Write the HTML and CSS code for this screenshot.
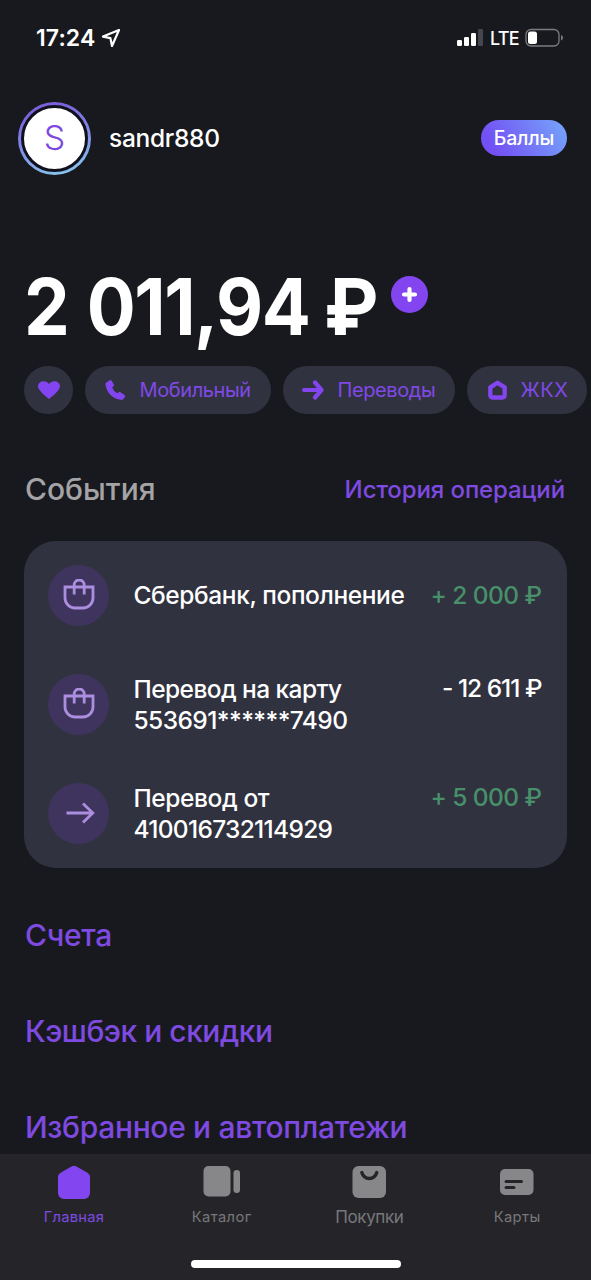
FILE: index.html
```html
<!DOCTYPE html>
<html lang="ru">
<head>
<meta charset="utf-8">
<title>Кошелёк</title>
<link rel="stylesheet" href="styles.css">
</head>
<body>
<div class="screen">
  <header class="status">
    <div class="status-left">
      <span class="time">17:24</span>
      <svg class="location" width="20" height="20" viewBox="0 0 20 20"><path d="M18 2 2 8.600l7.400 1.500L11 18z" fill="none" stroke="#fff" stroke-width="2.200" stroke-linejoin="round"/></svg>
    </div>
    <div class="status-right">
      <svg width="27" height="18" viewBox="0 0 27 18"><rect x="0" y="11" width="5" height="6" rx="1.300" fill="#fff"/><rect x="7" y="8" width="5" height="9" rx="1.300" fill="#fff"/><rect x="14" y="4" width="5" height="13" rx="1.300" fill="#fff"/><rect x="21" y="0" width="5" height="17" rx="1.300" fill="#46474e"/></svg>
      <span class="network">LTE</span>
      <svg width="39" height="20" viewBox="0 0 39 20"><rect x="1" y="1.500" width="33" height="16.500" rx="5" fill="none" stroke="#7b7b80" stroke-width="1.300"/><rect x="3" y="3.500" width="9" height="12.500" rx="2.500" fill="#fff"/><path d="M36 7c2.600.8 2.600 4.700 0 5.500z" fill="#7b7b80"/></svg>
    </div>
  </header>

  <section class="profile">
    <div class="avatar"><span class="avatar-face"><span class="initial">S</span></span></div>
    <span class="username">sandr880</span>
    <span class="points"><span class="points-label">Баллы</span></span>
  </section>

  <section class="balance">
    <span class="sum">2 011,94</span><span class="currency">₽</span>
    <span class="add"><svg width="37" height="37" viewBox="0 0 37 37"><path d="M18.500 13v11M13 18.500h11" stroke="#fff" stroke-width="4.200" stroke-linecap="round"/></svg></span>
  </section>

  <nav class="chips">
    <span class="chip chip-heart"><svg width="24" height="20" viewBox="0 0 24 20"><path d="M12 19C9.500 16.800 1 10.500 1 6.200 1 1.200 8.500-1 12 4c3.500-5 11-2.800 11 2.200 0 4.300-8.500 10.600-11 12.800z" fill="#8345f0"/></svg></span>
    <span class="chip chip-mobile"><svg width="21" height="22" viewBox="0 0 21 22"><path d="M1.700 3.300 4.500 1.400c.9-.6 1.800-.3 2.300.6l2 3.400c.4.800.3 1.400-.4 1.900L7.200 8.200c.7 2.500 2.500 4.600 5 6l1.300-.8c.7-.5 1.500-.5 2.200 0l3.600 2.300c.9.600 1.100 1.300.6 2.200l-1.100 1.700c-.7 1-1.700 1.500-3 1.200C7.600 19.600 1.900 14 .6 5.900c-.2-1.100.2-2 1.100-2.600z" fill="#8345f0"/></svg><span class="label">Мобильный</span></span>
    <span class="chip chip-transfer"><svg width="22" height="20" viewBox="0 0 22 20"><path d="M2.100 10h17M13 2.500 19.500 10 13 17.500" fill="none" stroke="#8345f0" stroke-width="4.200" stroke-linecap="round" stroke-linejoin="round"/></svg><span class="label">Переводы</span></span>
    <span class="chip chip-home"><svg width="19" height="20" viewBox="0 0 19 20"><path d="M2.300 7.400 9.500 2.700l7.200 4.700V15c0 1.600-.9 2.500-2.500 2.500H4.800c-1.600 0-2.500-.9-2.500-2.500z" fill="none" stroke="#8345f0" stroke-width="4.300" stroke-linejoin="round"/></svg><span class="label">ЖКХ</span></span>
  </nav>

  <div class="events-head">
    <h2 class="events-title">События</h2>
    <a class="history">История операций</a>
  </div>

  <section class="card">
    <article class="event">
      <span class="badge"><svg width="32" height="32" viewBox="0 0 32 32"><path d="M2 8h28v11a10 10 0 0 1-10 10h-8a10 10 0 0 1-10-10zM11.200 15.500V6a5 5 0 0 1 5-5 5 5 0 0 1 5 5V15.500" fill="none" stroke="#ac8ee0" stroke-width="2.800"/></svg></span>
      <p class="event-text"><span class="tight-1">Сбербанк, пополнение</span></p>
      <span class="amount income centered">+ 2 000 ₽</span>
    </article>
    <article class="event">
      <span class="badge"><svg width="32" height="32" viewBox="0 0 32 32"><path d="M2 8h28v11a10 10 0 0 1-10 10h-8a10 10 0 0 1-10-10zM11.200 15.500V6a5 5 0 0 1 5-5 5 5 0 0 1 5 5V15.500" fill="none" stroke="#ac8ee0" stroke-width="2.800"/></svg></span>
      <p class="event-text"><span class="tight-2">Перевод на карту</span><br><span class="tight-2">553691******7490</span></p>
      <span class="amount expense">- 12 611 ₽</span>
    </article>
    <article class="event">
      <span class="badge"><svg width="32" height="32" viewBox="0 0 32 32"><path d="M3.500 16h27M20 6.500 29.800 16 20 25.500" fill="none" stroke="#ac8ee0" stroke-width="2.800"/></svg></span>
      <p class="event-text"><span class="tight-1">Перевод от</span><br><span class="tight-3">410016732114929</span></p>
      <span class="amount income">+ 5 000 ₽</span>
    </article>
  </section>

  <nav class="links">
    <a>Счета</a>
    <a class="link-cashback">Кэшбэк и скидки</a>
    <a>Избранное и автоплатежи</a>
  </nav>

  <footer class="tabbar">
    <div class="tabs">
      <span class="tab active"><svg width="34" height="36" viewBox="0 0 34 36"><path d="M14.500 1.400a5 5 0 0 1 5 0L30 7.400a5 5 0 0 1 3 4.300V28a6 6 0 0 1-6 6H7a6 6 0 0 1-6-6V11.700a5 5 0 0 1 3-4.300z" fill="#8345f0"/></svg><span class="tab-home">Главная</span></span>
      <span class="tab"><svg width="38" height="36" viewBox="0 0 38 36"><rect x="0.500" y="1" width="27" height="30.500" rx="5" fill="#878789"/><rect x="30.500" y="5" width="6.500" height="23" rx="3.200" fill="#878789"/></svg><span class="tab-catalog">Каталог</span></span>
      <span class="tab"><svg width="34" height="36" viewBox="0 0 34 36"><rect x="0.500" y="1" width="33.500" height="32" rx="6" fill="#878789"/><path d="M9.800 7.500c2.500 8 12.500 8 15 0" fill="none" stroke="#252529" stroke-width="3.400" stroke-linecap="round"/></svg><span class="tab-shop">Покупки</span></span>
      <span class="tab"><svg width="34" height="36" viewBox="0 0 34 36"><rect x="0" y="4" width="33.500" height="26" rx="5" fill="#878789"/><path d="M6 16.500h15.500M6 22.500h8" fill="none" stroke="#252529" stroke-width="3" stroke-linecap="round"/></svg><span class="tab-cards">Карты</span></span>
    </div>
    <span class="home-indicator"></span>
  </footer>
</div>
</body>
</html>
```

FILE: styles.css
```css
* { box-sizing: border-box; }
body { margin: 0; background: #18191e; font-family: Inter, "Noto Sans", sans-serif; color: #fff; }
svg { display: block; flex: none; }
.screen { width: 591px; height: 1280px; display: flex; flex-direction: column; overflow: hidden; white-space: nowrap; }

.status { height: 76px; display: flex; justify-content: space-between; padding: 0 27px 0 36px; align-items: center; flex: none; }
.status-left, .status-right { display: flex; align-items: center; }
.status-left { gap: 6px; }
.status-right { gap: 6px; }
.time { font-size: 23px; font-weight: 600; letter-spacing: 0.1px; }
.network { font-size: 18px; font-weight: 500; letter-spacing: -0.7px; }

.profile { display: flex; align-items: center; height: 72px; margin: 26px 24px 0 18px; flex: none; }
.avatar { width: 73px; height: 73px; border-radius: 50%; padding: 3px; background: linear-gradient(165deg, #7b62dc 15%, #8288e6 50%, #86c2ec 90%); flex: none; }
.avatar-face { width: 67px; height: 67px; border: 3px solid #10111d; border-radius: 50%; background: #fff; display: flex; align-items: center; justify-content: center; }
.initial { color: #7e48df; font-size: 34px; font-weight: 300; line-height: 34px; padding-bottom: 1px; }
.username { margin-left: 18px; font-size: 24.500px; font-weight: 500; letter-spacing: -0.3px; flex: 1; }
.points { width: 86px; height: 36px; border-radius: 18px; background: linear-gradient(60deg, #7350f4 15%, #759df9 90%); display: flex; align-items: center; justify-content: center; }
.points-label { font-size: 19.500px; font-weight: 500; letter-spacing: -0.2px; }

.balance { display: flex; height: 96px; margin: 84px 0 0 24px; line-height: 96px; font-size: 79px; font-weight: 650; flex: none; }
.sum { width: 283px; letter-spacing: -1.600px; word-spacing: 3px; transform: scaleX(0.92); transform-origin: left; }
.currency { width: 56px; margin-left: 17px; font-size: 79px; transform: scaleX(0.93); transform-origin: left; }
.add { width: 37px; height: 37px; border-radius: 50%; background: #8345f0; margin: 18px 0 0 11px; }

.chips { display: flex; gap: 12px; margin: 11.500px 0 0 24px; height: 48.500px; flex: none; }
.chip { height: 48.500px; border-radius: 25px; background: #31323f; display: flex; align-items: center; flex: none; color: #8049e6; font-size: 20px; letter-spacing: -0.4px; }
.chip-heart { width: 49px; justify-content: center; }
.chip-mobile { width: 185.500px; padding-left: 19.500px; gap: 14px; }
.chip-transfer { width: 172px; padding-left: 19px; gap: 14px; }
.chip-home { width: 120px; padding-left: 21px; gap: 14px; letter-spacing: 0.5px; }

.events-head { display: flex; justify-content: space-between; align-items: center; height: 40px; margin: 55px 26px 0 25px; flex: none; }
.events-title { margin: 0; font-size: 30px; font-weight: 450; letter-spacing: 0; color: #a4a4a6; }
.history { font-size: 24px; font-weight: 500; letter-spacing: -0.1px; color: #7e4ae0; }

.card { height: 327px; margin: 32px 24px 0; padding: 24px; border-radius: 32px; background: #31323f; display: flex; flex-direction: column; gap: 49px; flex: none; }
.event { display: flex; height: 60px; align-items: center; font-size: 24.500px; font-weight: 500; line-height: 31px; }
.badge { width: 61px; height: 61px; border-radius: 50%; background: #3f345d; display: flex; align-items: center; justify-content: center; flex: none; }
.event-text { margin: 1px 0 0 24.500px; flex: 1; }
.tight-1 { letter-spacing: -0.4px; }
.tight-2 { letter-spacing: -0.57px; }
.tight-3 { letter-spacing: -0.7px; }
.amount { height: 62px; margin-right: 1.500px; letter-spacing: -0.55px; }
.centered { height: auto; }
.expense { letter-spacing: -1px; }
.income { color: #479069; }

.links { display: flex; flex-direction: column; margin: 46.500px 25px 0; gap: 56.250px; font-size: 30px; line-height: 40px; letter-spacing: -0.33px; color: #7e4ae0; font-weight: 500; height: 239.500px; flex: none; align-items: flex-start; overflow: hidden; }
.link-cashback { letter-spacing: -0.48px; }

.tabbar { flex: 1; background: #252529; }
.tabs { display: flex; }
.tab { display: flex; flex-direction: column; align-items: center; width: 148px; color: #78787b; padding-top: 11px; gap: 6px; font-size: 14.700px; line-height: 20px; letter-spacing: 0.4px; }
.active { color: #7e4ae0; }
.tab-home { letter-spacing: 0.25px; }
.tab-shop { font-size: 17px; letter-spacing: -0.4px; }
.home-indicator { display: block; width: 210px; height: 8px; border-radius: 4px; background: #fff; margin: 33px auto 0; }
```
